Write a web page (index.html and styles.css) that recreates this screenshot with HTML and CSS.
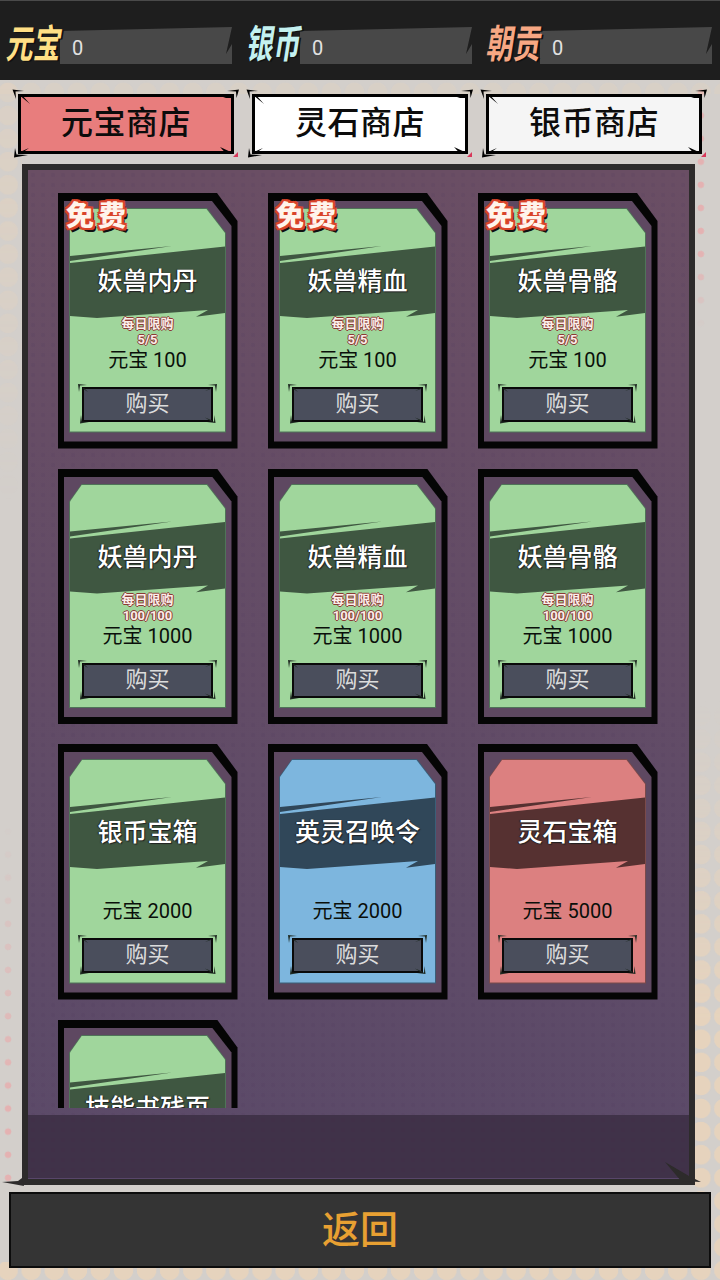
FILE: index.html
```html
<!DOCTYPE html>
<html lang="zh-CN">
<head>
    <meta charset="UTF-8">
    <meta name="viewport" content="width=device-width, initial-scale=1.0">
    <title>元宝商店</title>
    <link rel="stylesheet" href="styles.css">
</head>
<body>

    <svg class="defs" width="0" height="0">
        <symbol id="ticks-tab" viewBox="0 0 228 72">
            <path d="M0.5 1.5L12 3L3.5 3.5L4 11Z"/>
            <path d="M6 6L18 16L9 6Z"/>
            <path d="M227 1.5L215 3L224 3.5L224.5 10Z"/>
            <path d="M220 7L211 10L220 10Z"/>
            <path d="M2 69.5L3 60L4.5 66.5L16 67Z"/>
            <path d="M8 64L17 60L10 65Z"/>
            <path d="M208 59L221 65L214 65.5Z"/>
            <path d="M226 69L221 69L226 64Z" fill="#d8385a"/>
        </symbol>
        <symbol id="ticks-buy" viewBox="0 0 141 45">
            <path d="M1 2L10 3L3 3.6L2 10Z"/>
            <path d="M7 6L11 10L6 6.8Z"/>
            <path d="M140 2L131 3L138 3.6L139 10Z"/>
            <path d="M134 6L128 9L134 7Z"/>
            <path d="M3 41.5L4 33L5 39.5L12 40Z"/>
            <path d="M138.5 41L130 40L137 39.5L137.5 33Z"/>
            <path d="M128 35.5L135.5 38.5L134 39.5Z"/>
        </symbol>
    </svg>

    <div class="page">
        <header class="topbar">
            <div class="stat">
                <span class="stat-name gold">元宝</span>
                <span class="stat-bar">0</span>
            </div>
            <div class="stat">
                <span class="stat-name silver">银币</span>
                <span class="stat-bar">0</span>
            </div>
            <div class="stat">
                <span class="stat-name tribute">朝贡</span>
                <span class="stat-bar">0</span>
            </div>
        </header>

        <nav class="tabs">
            <div class="tab tab-active">元宝商店<svg class="tab-ticks"><use href="#ticks-tab"/></svg></div>
            <div class="tab">灵石商店<svg class="tab-ticks"><use href="#ticks-tab"/></svg></div>
            <div class="tab tab-soft">银币商店<svg class="tab-ticks"><use href="#ticks-tab"/></svg></div>
        </nav>

        <main class="panel">
            <div class="shop-scroll">
                <div class="shop-grid">

                    <div class="card green">
                        <div class="card-inner"><div class="face-edge"><div class="face">
                            <div class="banner">妖兽内丹</div>
                            <div class="limit"><span>每日限购</span><span>5/5</span></div>
                            <div class="price">元宝 100</div>
                            <div class="buy">购买<svg class="buy-ticks"><use href="#ticks-buy"/></svg></div>
                        </div></div></div>
                        <span class="free">免费</span>
                    </div>

                    <div class="card green">
                        <div class="card-inner"><div class="face-edge"><div class="face">
                            <div class="banner">妖兽精血</div>
                            <div class="limit"><span>每日限购</span><span>5/5</span></div>
                            <div class="price">元宝 100</div>
                            <div class="buy">购买<svg class="buy-ticks"><use href="#ticks-buy"/></svg></div>
                        </div></div></div>
                        <span class="free">免费</span>
                    </div>

                    <div class="card green">
                        <div class="card-inner"><div class="face-edge"><div class="face">
                            <div class="banner">妖兽骨骼</div>
                            <div class="limit"><span>每日限购</span><span>5/5</span></div>
                            <div class="price">元宝 100</div>
                            <div class="buy">购买<svg class="buy-ticks"><use href="#ticks-buy"/></svg></div>
                        </div></div></div>
                        <span class="free">免费</span>
                    </div>

                    <div class="card green">
                        <div class="card-inner"><div class="face-edge"><div class="face">
                            <div class="banner">妖兽内丹</div>
                            <div class="limit"><span>每日限购</span><span>100/100</span></div>
                            <div class="price">元宝 1000</div>
                            <div class="buy">购买<svg class="buy-ticks"><use href="#ticks-buy"/></svg></div>
                        </div></div></div>
                    </div>

                    <div class="card green">
                        <div class="card-inner"><div class="face-edge"><div class="face">
                            <div class="banner">妖兽精血</div>
                            <div class="limit"><span>每日限购</span><span>100/100</span></div>
                            <div class="price">元宝 1000</div>
                            <div class="buy">购买<svg class="buy-ticks"><use href="#ticks-buy"/></svg></div>
                        </div></div></div>
                    </div>

                    <div class="card green">
                        <div class="card-inner"><div class="face-edge"><div class="face">
                            <div class="banner">妖兽骨骼</div>
                            <div class="limit"><span>每日限购</span><span>100/100</span></div>
                            <div class="price">元宝 1000</div>
                            <div class="buy">购买<svg class="buy-ticks"><use href="#ticks-buy"/></svg></div>
                        </div></div></div>
                    </div>

                    <div class="card green">
                        <div class="card-inner"><div class="face-edge"><div class="face">
                            <div class="banner">银币宝箱</div>
                            <div class="limit"></div>
                            <div class="price">元宝 2000</div>
                            <div class="buy">购买<svg class="buy-ticks"><use href="#ticks-buy"/></svg></div>
                        </div></div></div>
                    </div>

                    <div class="card blue">
                        <div class="card-inner"><div class="face-edge"><div class="face">
                            <div class="banner">英灵召唤令</div>
                            <div class="limit"></div>
                            <div class="price">元宝 2000</div>
                            <div class="buy">购买<svg class="buy-ticks"><use href="#ticks-buy"/></svg></div>
                        </div></div></div>
                    </div>

                    <div class="card red">
                        <div class="card-inner"><div class="face-edge"><div class="face">
                            <div class="banner">灵石宝箱</div>
                            <div class="limit"></div>
                            <div class="price">元宝 5000</div>
                            <div class="buy">购买<svg class="buy-ticks"><use href="#ticks-buy"/></svg></div>
                        </div></div></div>
                    </div>

                    <!-- last row runs under the fold of the list -->
                    <div class="card green">
                        <div class="card-inner"><div class="face-edge"><div class="face">
                            <div class="banner">技能书残页</div>
                        </div></div></div>
                    </div>

                </div>
            </div>
            <div class="panel-foot"></div>
            <svg class="panel-tick" width="36" height="22" viewBox="0 0 36 22"><path d="M0 0L24 14L36 20L16 19Z"/></svg>
            <svg class="panel-tick-left" width="22" height="8" viewBox="0 0 22 8"><path d="M0 4L16 3L20 0L22 8Z"/></svg>
        </main>

        <button class="back" type="button">返回</button>
    </div>

</body>
</html>
```

FILE: styles.css
```css
* {
    box-sizing: border-box;
}
body {
    margin: 0;
    font-family: Roboto, "Noto Sans CJK SC", sans-serif;
    background-color: #d3cfcb;
}
.defs {
    position: absolute;
}
.page {
    position: relative;
    width: 720px;
    height: 1280px;
    overflow: hidden;
    display: flex;
    flex-direction: column;
    background-color: #d3cfcb;
}
/* halftone dots behind everything, only the margins show */
.page::before,
.page::after {
    content: "";
    position: absolute;
    inset: 0;
}
.page::before {
    background-image: radial-gradient(circle, #e4b2b2 0 3px, transparent 3.6px);
    background-size: 23.1px 23.1px;
    background-position: -3.5px -11.5px;
    -webkit-mask-image: linear-gradient(to bottom, #000 0, #000 250px, transparent 330px), linear-gradient(to bottom, transparent 820px, #000 1100px);
    mask-image: linear-gradient(to bottom, #000 0, #000 250px, transparent 330px), linear-gradient(to bottom, transparent 820px, #000 1100px);
    -webkit-mask-size: 24px 100%, 22px 1190px;
    mask-size: 24px 100%, 22px 1190px;
    -webkit-mask-position: 100% 0, 0 0;
    mask-position: 100% 0, 0 0;
    -webkit-mask-repeat: no-repeat;
    mask-repeat: no-repeat;
}
.page::after {
    background-image: radial-gradient(circle, #e6d3bd 0 9.5px, transparent 10.2px);
    background-size: 23.1px 23.1px;
    background-position: -3.5px -11.5px;
    -webkit-mask-image: linear-gradient(#000, #000), linear-gradient(to bottom, transparent 700px, #000 1020px), linear-gradient(to bottom, rgba(0,0,0,.25) 0, rgba(0,0,0,.45) 200px, transparent 500px), linear-gradient(rgba(0,0,0,.3), rgba(0,0,0,.3));
    mask-image: linear-gradient(#000, #000), linear-gradient(to bottom, transparent 700px, #000 1020px), linear-gradient(to bottom, rgba(0,0,0,.25) 0, rgba(0,0,0,.45) 200px, transparent 500px), linear-gradient(rgba(0,0,0,.3), rgba(0,0,0,.3));
    -webkit-mask-size: 100% 18px, 26px 100%, 22px 100%, 100% 14px;
    mask-size: 100% 18px, 26px 100%, 22px 100%, 100% 14px;
    -webkit-mask-position: 0 100%, 100% 0, 0 0, 0 80px;
    mask-position: 0 100%, 100% 0, 0 0, 0 80px;
    -webkit-mask-repeat: no-repeat;
    mask-repeat: no-repeat;
}
.topbar,
.tabs,
.panel,
.back {
    position: relative;
    z-index: 1;
}

/* top currency bar */
.topbar {
    flex: none;
    height: 80px;
    display: flex;
    background-color: #1e1e1e;
    border-top: 1px solid #4a4a4a;
}
.stat {
    width: 240px;
    position: relative;
}
.stat-name {
    position: absolute;
    z-index: 1;
    left: 8px;
    top: 19px;
    font-family: "Noto Sans CJK SC", sans-serif;
    font-size: 27px;
    font-weight: 700;
    line-height: 44px;
    transform: skewX(-9deg) scaleY(1.45);
    text-shadow: 2px 1px 0 #111;
}
.gold { color: #ffdf85; }
.silver { color: #c4f1f0; }
.tribute { color: #f7a783; }
.stat-bar {
    position: absolute;
    left: 60px;
    top: 26px;
    width: 172px;
    height: 37px;
    padding: 7px 0 0 12px;
    font-size: 20px;
    line-height: 28px;
    color: #e2e2e2;
    background-color: #484848;
    clip-path: polygon(0 4px, 172px 0, 166px 27px, 172px 17px, 172px 100%, 0 100%);
}

/* shop tabs */
.tabs {
    flex: none;
    display: flex;
    gap: 18px;
    padding: 14px 0 0 18px;
}
.tab {
    position: relative;
    width: 216px;
    height: 60px;
    border: 3px solid #000;
    background-color: #fff;
    color: #0c0c0c;
    font-family: "Noto Sans CJK SC", sans-serif;
    font-size: 32px;
    font-weight: 500;
    letter-spacing: .5px;
    line-height: 47px;
    text-align: center;
}
.tab-active {
    background-color: #e87d7d;
}
.tab-soft {
    background-color: #f5f5f5;
}
.tab-ticks {
    position: absolute;
    left: -9px;
    top: -9px;
    width: 228px;
    height: 72px;
}

/* big purple panel */
.panel {
    flex: none;
    width: 673px;
    height: 1021px;
    margin: 10px 0 0 22px;
    display: flex;
    flex-direction: column;
    gap: 7px;
    border: 6px solid #2d2b2b;
    background-color: #5f4b66;
    background-image: radial-gradient(circle, rgba(70,50,90,.1) 0 2px, transparent 2.5px), linear-gradient(to bottom, #6a4e64, #5b4a69);
    background-size: 10px 10px, 100% 100%;
}
.shop-scroll {
    flex: none;
    height: 938px;
    padding: 23px 0 0 30px;
    overflow: hidden;
}
.shop-grid {
    display: grid;
    grid-template-columns: repeat(3, 180px);
    grid-auto-rows: 255.5px;
    column-gap: 30px;
    row-gap: 20px;
}
.panel-foot {
    flex: 1;
    background-color: #403249;
    background-image: radial-gradient(circle, rgba(70,40,70,.2) 0 2px, transparent 2.5px);
    background-size: 10px 10px;
    border-bottom: 1px solid #58466a;
}
.panel-tick {
    position: absolute;
    right: -12px;
    bottom: -5px;
    fill: #2d2b2b;
}
.panel-tick-left {
    position: absolute;
    left: -26px;
    bottom: -7px;
    fill: #2d2b2b;
}

/* item cards */
.card {
    position: relative;
    padding: 8px 6px 7px 6px;
    background-color: #050505;
    clip-path: polygon(0 0, 159px 0, 179.5px 28px, 179.5px 100%, 0 100%);
}
.card-inner {
    height: 100%;
    padding: 7px 6px 9px 5px;
    background-color: #5e4861;
    clip-path: polygon(0 0, 148px 0, 167.5px 25px, 167.5px 100%, 0 100%);
}
.face-edge {
    height: 100%;
    padding: 1px;
    clip-path: polygon(13px 0, 138px 0, 157px 25px, 157px 100%, 0 100%, 0 18px);
}
.green .face-edge { background-color: #4f7458; }
.blue .face-edge { background-color: #3a5f78; }
.red .face-edge { background-color: #7a4a4a; }
.face {
    height: 100%;
    display: flex;
    flex-direction: column;
    align-items: center;
    clip-path: polygon(12px 0, 136.5px 0, 155px 24px, 155px 100%, 0 100%, 0 17px);
}
.green .face { background-color: #a0d69c; }
.blue .face { background-color: #7db6de; }
.red .face { background-color: #dc8080; }
.banner {
    flex: none;
    width: 155px;
    height: 76px;
    margin-top: 35px;
    padding-top: 4px;
    color: #fff;
    font-size: 25px;
    font-weight: 500;
    line-height: 68px;
    text-align: center;
    text-shadow: 1px 1px 1px #222, -1px 0 1px #222;
    clip-path: polygon(0 12px, 102px 2px, 0 17px, 0 19px, 155px 2.5px, 155px 69px, 126px 72.7px, 138px 66px, 27px 74px, 0 72px);
}
.green .banner { background-color: #3f5741; }
.blue .banner { background-color: #304759; }
.red .banner { background-color: #563131; }
.limit {
    flex: none;
    height: 31px;
    margin-top: -4px;
    display: flex;
    flex-direction: column;
    align-items: center;
    font-size: 13px;
    font-weight: 700;
    line-height: 16px;
    color: #fbeeea;
    text-shadow: 1px 0 0 #8a3a34, -1px 0 0 #8a3a34, 0 1px 0 #8a3a34, 0 -1px 0 #8a3a34;
}
.price {
    flex: none;
    height: 26px;
    color: #0a0f0a;
    font-size: 20px;
    line-height: 26px;
}
.buy {
    position: relative;
    flex: none;
    width: 131px;
    height: 35px;
    margin-top: 14px;
    border: 2px solid #0a0a0a;
    background-color: #4a4e5c;
    color: #dcdcdc;
    font-size: 22px;
    line-height: 29px;
    text-align: center;
}
.buy-ticks {
    position: absolute;
    left: -7px;
    top: -7px;
    width: 141px;
    height: 45px;
    fill: #1f2a22;
}
.free {
    position: absolute;
    left: 8px;
    top: 3px;
    font-family: "Noto Sans CJK SC", sans-serif;
    font-size: 28px;
    font-weight: 900;
    letter-spacing: 4px;
    line-height: 36px;
    color: #fff3ec;
    text-shadow: 2px 0 0 #d9432a, -2px 0 0 #d9432a, 0 2px 0 #d9432a, 0 -2px 0 #d9432a, 2px 2px 0 #d9432a, -2px 2px 0 #d9432a, 2px -2px 0 #d9432a, -2px -2px 0 #d9432a, 3px 4px 0 #111;
}

/* back button */
.back {
    flex: none;
    width: 702px;
    height: 76px;
    margin: 7px 0 0 9px;
    padding: 0 0 7px;
    border: 2px solid #0c0c0c;
    background-color: #343434;
    color: #e8a032;
    font-family: "Noto Sans CJK SC", sans-serif;
    font-size: 38px;
    font-weight: 500;
    line-height: 60px;
}
```
